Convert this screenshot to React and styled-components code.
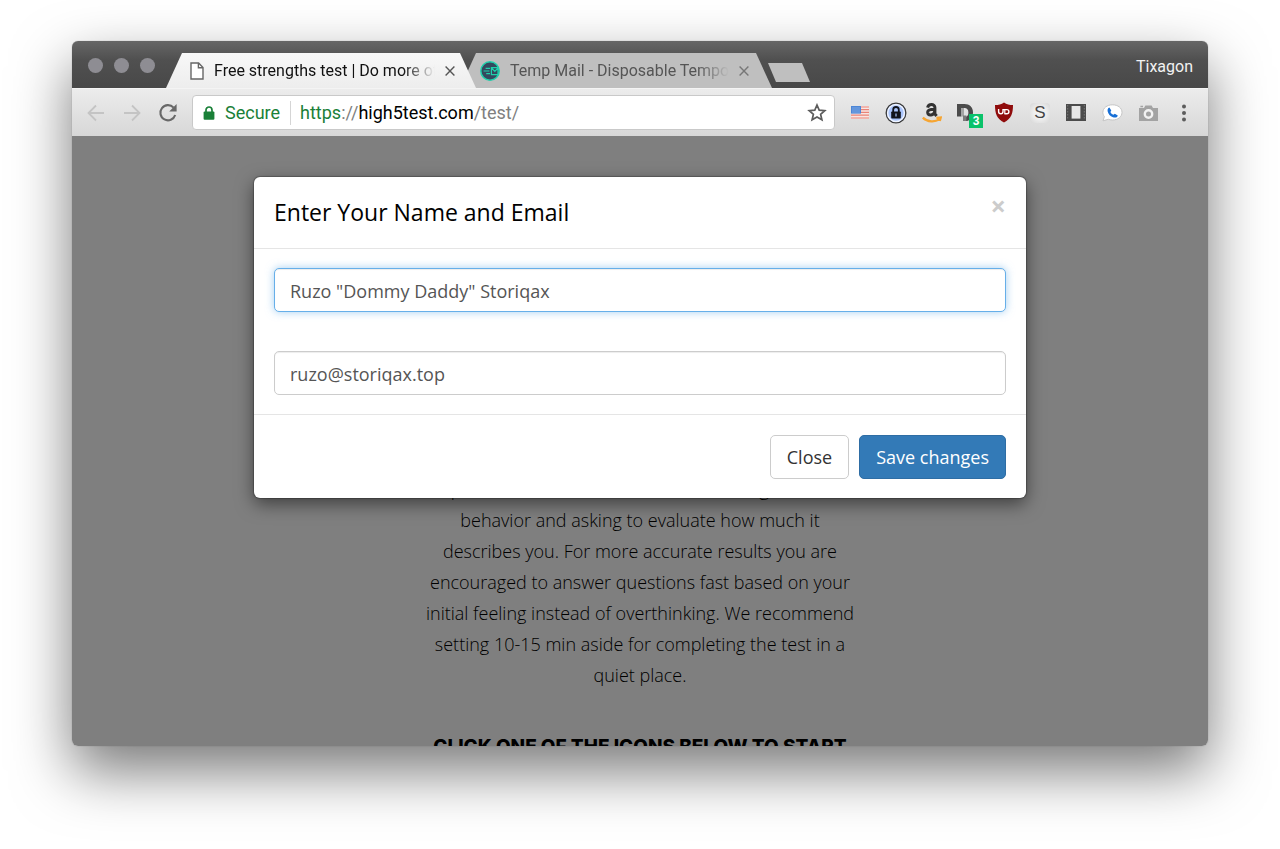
import styled, { createGlobalStyle } from "styled-components";

const GlobalStyle = createGlobalStyle`
    * {
        box-sizing: border-box;
    }
    body {
        margin: 0;
        background: #fff;
        font-family: "Open Sans", "Liberation Sans", sans-serif;
    }
`;

const BackIcon = () => (
    <svg width="18" height="18" viewBox="0 0 18 18" fill="none" stroke="#c4c4c4" strokeWidth="1.8">
        <path d="M17 9H2M9 1.5L1.5 9L9 16.5" />
    </svg>
);

const ForwardIcon = () => (
    <svg width="18" height="18" viewBox="0 0 18 18" fill="none" stroke="#c4c4c4" strokeWidth="1.8">
        <path d="M1 9H16M9 1.5L16.5 9L9 16.5" />
    </svg>
);

const ReloadIcon = () => (
    <svg width="20" height="20" viewBox="0 0 20 20" fill="none">
        <path d="M15.6 4.6A7.6 7.6 0 1 0 17.2 12" stroke="#686868" strokeWidth="2.1" />
        <path d="M18.6 1V8.4H11.2Z" fill="#686868" />
    </svg>
);

const PageIcon = () => (
    <svg width="14" height="18" viewBox="0 0 14 18" fill="none" stroke="#666" strokeWidth="1.4">
        <path d="M1 1H8.6L13 5.6V17H1Z" fill="#fff" />
        <path d="M8.4 1V5.8H13" />
    </svg>
);

const MailIcon = () => (
    <svg width="20" height="20" viewBox="0 0 20 20">
        <circle cx="10" cy="10" r="9.2" fill="#34495e" stroke="#1fd1ac" strokeWidth="1.5" />
        <path d="M5.6 7.3H10M3.6 10H9.4M6.2 12.7H10" stroke="#1fd1ac" strokeWidth="1.2" />
        <path d="M11.4 6.6H18V13.6H11.4ZM11.6 7L14.8 10.4L18 7" fill="none" stroke="#1fd1ac" strokeWidth="1.2" />
    </svg>
);

const CrossIcon = ({ color }) => (
    <svg width="10" height="10" viewBox="0 0 10 10" stroke={color} strokeWidth="1.4">
        <path d="M.6 .6L9.4 9.4M9.4 .6L.6 9.4" />
    </svg>
);

const PadlockIcon = () => (
    <svg width="12" height="14" viewBox="0 0 12 14" fill="none">
        <path d="M3 6V4A3 3 0 0 1 9 4V6" stroke="#1a8038" strokeWidth="1.7" />
        <rect x=".6" y="5.4" width="10.8" height="8.4" rx="1" fill="#1a8038" />
    </svg>
);

const StarIcon = () => (
    <svg width="20" height="19" viewBox="0 0 20 19" fill="none" stroke="#5c5c5c" strokeWidth="1.7">
        <path d="M10 2L12.2 7.1L17.8 7.6L13.6 11.3L14.9 16.8L10 13.9L5.1 16.8L6.4 11.3L2.2 7.6L7.8 7.1Z" />
    </svg>
);

const FlagIcon = () => (
    <svg width="18" height="13" viewBox="0 0 18 13">
        <rect width="18" height="13" fill="#f8e6e3" />
        <path d="M0 1H18M0 3.7H18M0 6.4H18M0 9.2H18M0 12H18" stroke="#e98378" strokeWidth="1.2" />
        <rect width="10" height="7.6" fill="#4d86d6" />
        <path d="M1.5 2H9M1.5 4H9M1.5 6H9" stroke="#b9d3f5" strokeWidth=".9" strokeDasharray="1 1" />
    </svg>
);

const SafeIcon = () => (
    <svg width="22" height="22" viewBox="0 0 22 22" fill="none">
        <circle cx="11" cy="11" r="9.8" fill="#a9c4fb" stroke="#3d3d3d" strokeWidth="1.4" />
        <circle cx="11" cy="11" r="8.4" stroke="#eef3ff" strokeWidth="1.5" />
        <path d="M8.2 10V7.8A2.8 2.8 0 0 1 13.8 7.8V10" stroke="#10131c" strokeWidth="1.8" />
        <rect x="6.2" y="9.4" width="9.6" height="7.2" rx=".8" fill="#10131c" />
        <path d="M11 11.4V14.4" stroke="#a9c4fb" strokeWidth="1.2" />
    </svg>
);

const AmazonIcon = () => (
    <svg width="20" height="20" viewBox="0 0 20 20" fill="none">
        <path d="M5.6 4.6C6.4 .6 13 .4 12.9 4.8V11L14.6 13M12.8 6.2C7.8 6 5.4 7.4 5.7 9.8C6.2 13 11.8 12.6 12.7 8.6" stroke="#333" strokeWidth="3" />
        <path d="M.8 14.6C5.6 19.4 13 19.2 17.4 16.4M14.4 14.8L18.8 14.4L17.8 18" stroke="#f6a532" strokeWidth="2.2" />
    </svg>
);

const DisconnectIcon = () => (
    <svg width="24" height="20" viewBox="0 0 24 20" fill="none">
        <path d="M1 1H8.4C13.6 1 17 4.2 17 9.4C17 14.4 14 17.8 9.4 18V13.8C11.4 13.4 12.4 11.8 12.4 9.4C12.4 6.6 11 5 8.4 5H5.4V13.4H1Z" fill="#4b4b4b" />
        <path d="M5.4 5H8V13.4H5.4Z" fill="#a4a4a4" />
        <path d="M7 12.6H10.4V18H7Z" fill="#7a7a7a" />
    </svg>
);

const ShieldIcon = () => (
    <svg width="20" height="21" viewBox="0 0 20 21" fill="none">
        <path d="M10 .5C12.6 2.4 15.6 3.1 19 3.1C19 11.8 17.4 16.6 10 20.5C2.6 16.6 1 11.8 1 3.1C4.4 3.1 7.4 2.4 10 .5Z" fill="#8f0c0c" />
        <path d="M4.6 7V9.6A2.2 2.2 0 0 0 9 9.6V7" stroke="#fff" strokeWidth="1.4" />
        <path d="M9 7.6H12.8A2.1 2.1 0 0 1 12.8 11.8H10.4" stroke="#fff" strokeWidth="1.4" />
        <path d="M10.8 7.6V11.8" stroke="#fff" strokeWidth="1.2" />
    </svg>
);

const ReaderIcon = () => (
    <svg width="20" height="17" viewBox="0 0 20 17" fill="none">
        <rect width="20" height="17" fill="#4b4b4b" />
        <rect x="5.6" y="2" width="8.8" height="12.6" fill="#e6e6e6" />
        <path d="M1.7 1V16M18.3 1V16" stroke="#777" strokeWidth="1" strokeDasharray="1.5 1.5" />
    </svg>
);

const PhoneIcon = () => (
    <svg width="21" height="18" viewBox="0 0 21 18" fill="none">
        <path d="M10.5 .8C16 .8 20 4 20 8.4S16 16 10.5 16C9 16 7.6 15.8 6.4 15.3L1 16.8L2.4 12.6C1.4 11.4 .9 10 .9 8.4C.9 4 5 .8 10.5 .8Z" fill="#fff" stroke="#c4c4c4" />
        <path d="M7.4 3.6L9.3 6.6L8.4 8C9 9.4 10 10.2 11.4 10.8L12.8 9.8L15.8 11.4C15.2 13.6 13 14 11 13.2C8 12 6.3 10 5.7 7.4C5.3 5.6 5.8 4.2 7.4 3.6Z" fill="#176fd6" />
    </svg>
);

const CameraIcon = () => (
    <svg width="19" height="16" viewBox="0 0 19 16" fill="none">
        <path d="M0 3H5L6.4 .4H12.6L14 3H19V16H0Z" fill="#a3a3a3" />
        <path d="M1.4 1.5H4" stroke="#a3a3a3" strokeWidth="1.5" />
        <circle cx="9.5" cy="9" r="3.7" stroke="#f2f2f2" strokeWidth="2.4" />
    </svg>
);

const DotsIcon = () => (
    <svg width="4" height="18" viewBox="0 0 4 18" fill="#5c5c5c">
        <circle cx="2" cy="2.4" r="2" />
        <circle cx="2" cy="9" r="2" />
        <circle cx="2" cy="15.6" r="2" />
    </svg>
);

const App = () => {
    return (
        <Desktop>
            <GlobalStyle />
            <Window>
                <TabStrip>
                    <Lights>
                        <Light /><Light /><Light />
                    </Lights>
                    <Tab $active>
                        <PageIcon />
                        <TabTitle>Free strengths test | Do more of what</TabTitle>
                        <TabClose aria-label="Close tab"><CrossIcon color="#555" /></TabClose>
                    </Tab>
                    <Tab>
                        <MailIcon />
                        <TabTitle>Temp Mail - Disposable Temporary</TabTitle>
                        <TabClose aria-label="Close tab"><CrossIcon color="#777" /></TabClose>
                    </Tab>
                    <NewTab aria-label="New tab" />
                    <Profile>Tixagon</Profile>
                </TabStrip>

                <Toolbar>
                    <ToolButton aria-label="Back"><BackIcon /></ToolButton>
                    <ToolButton aria-label="Forward"><ForwardIcon /></ToolButton>
                    <ToolButton aria-label="Reload"><ReloadIcon /></ToolButton>
                    <AddressBar>
                        <PadlockIcon />
                        <Secure>Secure</Secure>
                        <Url><Scheme>https</Scheme>://<Host>high5test.com</Host>/test/</Url>
                        <StarButton aria-label="Bookmark this page"><StarIcon /></StarButton>
                    </AddressBar>
                    <ToolButton aria-label="Flag"><FlagIcon /></ToolButton>
                    <ToolButton aria-label="Password manager"><SafeIcon /></ToolButton>
                    <ToolButton aria-label="Amazon"><AmazonIcon /></ToolButton>
                    <ToolButton aria-label="Disconnect"><DisconnectIcon /><Badge>3</Badge></ToolButton>
                    <ToolButton aria-label="Blocker"><ShieldIcon /></ToolButton>
                    <ToolButton aria-label="Stylish"><Letter>S</Letter></ToolButton>
                    <ToolButton aria-label="Reader"><ReaderIcon /></ToolButton>
                    <ToolButton aria-label="Phone"><PhoneIcon /></ToolButton>
                    <ToolButton aria-label="Screenshot"><CameraIcon /></ToolButton>
                    <ToolButton aria-label="Menu"><DotsIcon /></ToolButton>
                </Toolbar>

                <Viewport>
                    <Article>
                        <Intro>
                            presents a set of statements describing certain<br />
                            behavior and asking to evaluate how much it<br />
                            describes you. For more accurate results you are<br />
                            encouraged to answer questions fast based on your<br />
                            initial feeling instead of overthinking. We recommend<br />
                            setting 10-15 min aside for completing the test in a<br />
                            quiet place.
                        </Intro>
                        <StartHeading>CLICK ONE OF THE ICONS BELOW TO START</StartHeading>
                    </Article>
                    <Backdrop>
                        <Modal role="dialog" aria-labelledby="modal-title">
                            <ModalHeader>
                                <ModalTitle id="modal-title">Enter Your Name and Email</ModalTitle>
                                <ModalClose aria-label="Close">×</ModalClose>
                            </ModalHeader>
                            <ModalBody>
                                <Input $focused aria-label="Name" defaultValue={'Ruzo "Dommy Daddy" Storiqax'} />
                                <Input aria-label="Email" type="email" defaultValue="ruzo@storiqax.top" />
                            </ModalBody>
                            <ModalFooter>
                                <Button>Close</Button>
                                <PrimaryButton>Save changes</PrimaryButton>
                            </ModalFooter>
                        </Modal>
                    </Backdrop>
                </Viewport>
            </Window>
        </Desktop>
    )
}

const Desktop = styled.div`
    display: flex;
    height: 100vh;
    padding: 41px 72px 103px;
    overflow: hidden;
`;

const Window = styled.div`
    flex: 1;
    min-width: 0;
    display: flex;
    flex-direction: column;
    border-radius: 6px;
    overflow: hidden;
    box-shadow: 0 0 1px rgba(0, 0, 0, 0.4), 0 25px 58px rgba(0, 0, 0, 0.53);
`;

const TabStrip = styled.div`
    flex: none;
    display: flex;
    align-items: flex-end;
    height: 47px;
    padding: 0 15px 0 16px;
    background: linear-gradient(#666, #505050 40%, #484848);
    font-family: Roboto, "Liberation Sans", sans-serif;
`;

const Lights = styled.div`
    display: flex;
    gap: 11px;
    margin-right: 11px;
    padding-bottom: 15px;
`;

const Light = styled.span`
    width: 15px;
    height: 15px;
    border-radius: 50%;
    background: #8e8d93;
`;

const Tab = styled.div`
    position: relative;
    z-index: ${({ $active }) => ($active ? 1 : 0)};
    display: flex;
    align-items: center;
    width: 310px;
    height: 35px;
    padding: 0 20px 0 24px;
    background: ${({ $active }) => ($active ? "linear-gradient(#f8f8f8, #ededed)" : "#bfbfbf")};
    color: ${({ $active }) => ($active ? "#111" : "#555")};
    clip-path: polygon(16px 0, calc(100% - 16px) 0, 100% 100%, 0 100%);

    & + & {
        width: 312px;
        margin-left: -16px;
        padding: 0 22px 0 20px;
    }
`;

const TabTitle = styled.span`
    flex: 1;
    margin: 0 9px 0 10px;
    overflow: hidden;
    white-space: nowrap;
    font-size: 16px;
    line-height: 24px;
    mask-image: linear-gradient(to right, #000 calc(100% - 32px), transparent);
`;

const IconButton = styled.button`
    display: flex;
    align-items: center;
    justify-content: center;
    padding: 0;
    border: none;
    background: none;
    cursor: pointer;
`;

const TabClose = styled(IconButton)`
    width: 12px;
    height: 16px;
`;

const NewTab = styled(IconButton)`
    width: 42px;
    height: 19px;
    margin: 0 0 6px -4px;
    background: #bfbfbf;
    clip-path: polygon(0 0, 34px 0, 42px 100%, 8px 100%);
`;

const Profile = styled.span`
    margin-left: auto;
    padding-bottom: 9px;
    color: #f2f2f2;
    font-size: 16px;
    line-height: 24px;
`;

const Toolbar = styled.div`
    flex: none;
    display: flex;
    align-items: center;
    height: 48px;
    padding: 0 6px;
    border-top: 1px solid #f4f4f4;
    background: linear-gradient(#ececec, #d7d7d7);
    font-family: Roboto, "Liberation Sans", sans-serif;
`;

const ToolButton = styled(IconButton)`
    position: relative;
    flex: none;
    width: 36px;
    height: 36px;
`;

const Badge = styled.span`
    position: absolute;
    right: 3px;
    bottom: 3px;
    width: 14px;
    height: 14px;
    background: #0ac26a;
    color: #fff;
    font: bold 12px/14px "Liberation Sans", sans-serif;
`;

const Letter = styled.span`
    width: 20px;
    height: 20px;
    border-radius: 4px;
    background: radial-gradient(#f0f0f0 40%, #d6d6d6);
    color: #444;
    font: 17px/20px "Liberation Sans", sans-serif;
`;

const AddressBar = styled.div`
    flex: 1;
    display: flex;
    align-items: center;
    min-width: 0;
    height: 35px;
    margin: 0 7px 0 6px;
    padding: 0 7px 0 10px;
    border: 1px solid #c9c9c9;
    border-radius: 4px;
    background: #fff;
    font-size: 18px;
    line-height: 24px;
`;

const Secure = styled.span`
    margin-left: 10px;
    padding-right: 10px;
    border-right: 1px solid #d5d5d5;
    color: #1a8038;
`;

const Url = styled.span`
    margin-left: 9px;
    color: #808080;
`;

const Scheme = styled.span`
    color: #1a8038;
`;

const Host = styled.span`
    color: #000;
`;

const StarButton = styled(IconButton)`
    margin-left: auto;
`;

const Viewport = styled.div`
    position: relative;
    flex: 1;
    min-height: 0;
    overflow: hidden;
    background: #fff;
`;

const Article = styled.article`
    display: flex;
    flex-direction: column;
    align-items: center;
    padding-top: 338px;
    text-align: center;
    white-space: nowrap;
`;

const Intro = styled.p`
    margin: 0;
    color: #000;
    font-size: 18px;
    font-weight: 300;
    line-height: 31px;
`;

const StartHeading = styled.h3`
    margin: 43px 0 0;
    color: #000;
    font-family: Inter, "Liberation Sans", sans-serif;
    font-size: 19px;
    font-weight: 800;
    line-height: 26px;
`;

const Backdrop = styled.div`
    position: absolute;
    inset: 0;
    padding: 41px 20px;
    background: rgba(0, 0, 0, 0.5);
`;

const Modal = styled.div`
    max-width: 772px;
    margin: 0 auto;
    border-radius: 6px;
    background: #fff;
    box-shadow: 0 0 1px 1px rgba(0, 0, 0, 0.25), 0 6px 18px rgba(0, 0, 0, 0.5);
`;

const ModalHeader = styled.div`
    display: flex;
    align-items: flex-start;
    justify-content: space-between;
    padding: 19px 20px;
    border-bottom: 1px solid #e5e5e5;
`;

const ModalTitle = styled.h4`
    margin: 0;
    color: #000;
    font-size: 23px;
    font-weight: 400;
    line-height: 33px;
`;

const ModalClose = styled(IconButton)`
    color: #ccc;
    font: bold 27px/20px "Open Sans", sans-serif;
`;

const ModalBody = styled.div`
    display: flex;
    flex-direction: column;
    gap: 39px;
    padding: 19px 20px;
`;

const Input = styled.input`
    height: 44px;
    padding: 2px 15px 0;
    border: 1px solid ${({ $focused }) => ($focused ? "#66afe9" : "#ccc")};
    border-radius: 5px;
    outline: none;
    background: #fff;
    box-shadow: inset 0 1px 1px rgba(0, 0, 0, 0.075)${({ $focused }) => $focused && ", 0 0 8px rgba(102, 175, 233, 0.6)"};
    color: #555;
    font: 18px/26px "Open Sans", sans-serif;
`;

const ModalFooter = styled.div`
    display: flex;
    justify-content: flex-end;
    gap: 10px;
    padding: 20px 20px 19px;
    border-top: 1px solid #e5e5e5;
`;

const Button = styled.button`
    height: 44px;
    padding: 0 16px;
    border: 1px solid #ccc;
    border-radius: 5px;
    background: #fff;
    color: #333;
    font: 18px/26px "Open Sans", sans-serif;
    cursor: pointer;
`;

const PrimaryButton = styled(Button)`
    border-color: #2e6da4;
    background: #337ab7;
    color: #fff;
`;

export default App;
